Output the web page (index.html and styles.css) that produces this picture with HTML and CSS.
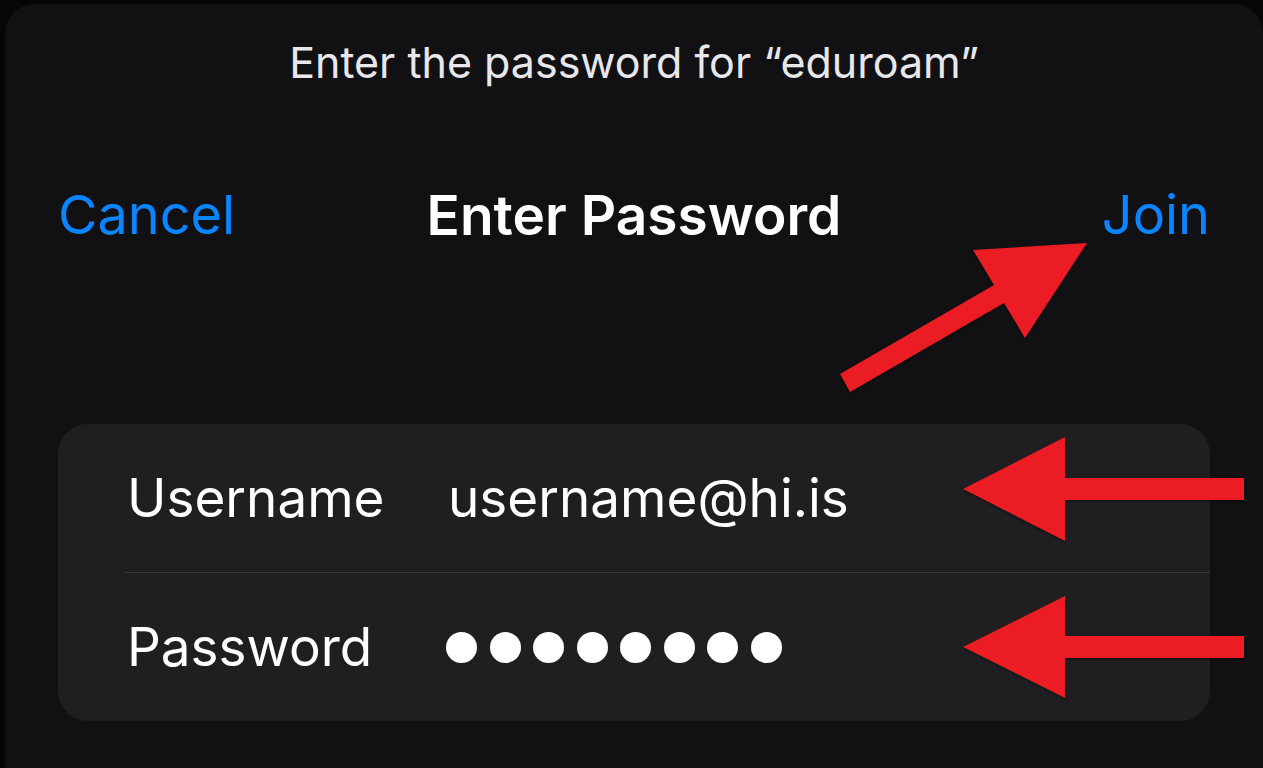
FILE: index.html
```html
<!DOCTYPE html>
<html lang="en">
<head>
    <meta charset="UTF-8">
    <meta name="viewport" content="width=device-width, initial-scale=1.0">
    <title>Enter Password</title>
    <link rel="stylesheet" href="styles.css">
</head>
<body>
    <div class="sheet">
        <p class="prompt">Enter the password for “eduroam”</p>
        <div class="navbar">
            <span class="nav-btn">Cancel</span>
            <span class="nav-title">Enter Password</span>
            <span class="nav-btn nav-right">Join</span>
        </div>
        <div class="group">
            <div class="row">
                <span class="label">Username</span>
                <span class="value">username@hi.is</span>
            </div>
            <div class="row">
                <span class="label">Password</span>
                <span class="dots">
                    <i class="dot"></i><i class="dot"></i><i class="dot"></i><i class="dot"></i>
                    <i class="dot"></i><i class="dot"></i><i class="dot"></i><i class="dot"></i>
                </span>
            </div>
        </div>
    </div>

    <!-- red annotation arrows drawn over the screenshot -->
    <svg class="marks" width="1263" height="768" viewBox="0 0 1263 768" xmlns="http://www.w3.org/2000/svg">
        <polygon points="840,374 994,285 973,250 1087,243 1025,338 1004,303 850,392"/>
        <polygon points="1244,478 1065,478 1065,437 963,489 1065,541 1065,500 1244,500"/>
        <polygon points="1244,636 1065,636 1065,596 963,647 1065,698 1065,658 1244,658"/>
    </svg>
</body>
</html>
```

FILE: styles.css
```css
body {
    margin: 0;
    width: 1263px;
    height: 768px;
    overflow: hidden;
    background-color: #060608;
    font-family: Inter, "Noto Sans", sans-serif;
    position: relative;
}
.sheet {
    margin: 4px 0 0 5px;
    height: 764px;
    box-sizing: border-box;
    padding-top: 33px;
    background-color: #111113;
    border-radius: 30px 30px 0 0;
}
.prompt {
    margin: 0;
    text-align: center;
    font-size: 43px;
    line-height: 50px;
    color: #e8e8ec;
}
.navbar {
    margin-top: 98px;
    display: grid;
    grid-template-columns: 1fr auto 1fr;
    align-items: center;
    padding: 0 53px 0 53px;
    height: 60px;
}
.nav-btn {
    font-size: 54px;
    line-height: 60px;
    color: #0b84ff;
}
.nav-right {
    text-align: right;
}
.nav-title {
    font-size: 55px;
    line-height: 60px;
    font-weight: 600;
    color: #fff;
}
.group {
    margin: 179px 53px 0 53px;
    padding-left: 67px;
    background-color: #1f1f21;
    border-radius: 30px;
}
.row {
    display: flex;
    align-items: center;
    height: 148px;
    padding-left: 2px;
    border-bottom: 1px solid #38383a;
}
.row:last-child {
    border-bottom: none;
}
.label {
    width: 321px;
    font-size: 53px;
    line-height: 60px;
    color: #fff;
}
.value {
    font-size: 53px;
    line-height: 60px;
    color: #fff;
}
.dots {
    display: flex;
    gap: 12.5px;
    margin-left: -2px;
}
.dot {
    width: 31px;
    height: 31px;
    border-radius: 50%;
    background-color: #fff;
}
.marks {
    position: absolute;
    top: 0;
    left: 0;
    pointer-events: none;
}
.marks polygon {
    fill: #ec1c24;
    filter: drop-shadow(0 1px 1px rgba(0, 0, 0, 0.6));
}
```
